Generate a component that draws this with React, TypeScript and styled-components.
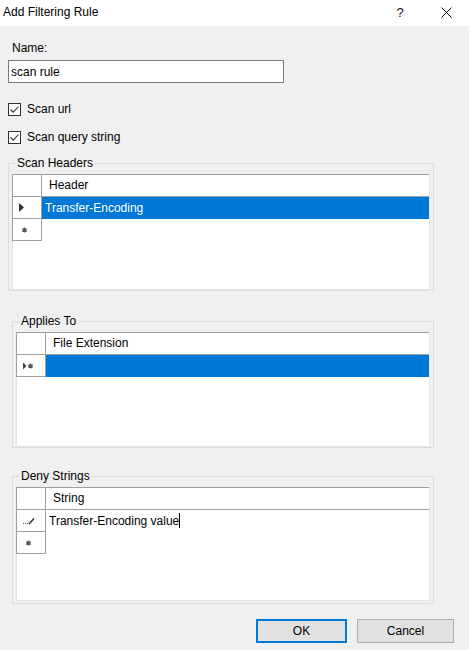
import React from 'react';
import styled, { createGlobalStyle } from 'styled-components';

const GlobalStyle = createGlobalStyle`
  html, body {
    margin: 0;
    padding: 0;
    background: #f0f0f0;
  }
  body {
    font-family: "Segoe UI", "Liberation Sans", Arial, sans-serif;
    font-size: 12px;
    color: #000;
  }
`;

const Window = styled.div`
  width: 469px;
  height: 650px;
  background: #f0f0f0;
  display: flex;
  flex-direction: column;
  overflow: hidden;
`;

const TitleBar = styled.div`
  height: 26px;
  background: #fff;
  display: flex;
  align-items: flex-start;
`;

const TitleText = styled.div`
  flex: 1;
  padding: 5px 0 0 3px;
  line-height: 15px;
`;

const TitleButton = styled.div`
  width: 46px;
  height: 24px;
  display: flex;
  align-items: center;
  justify-content: center;
  font-size: 13px;
  color: #111;
`;

const Body = styled.div`
  display: flex;
  flex-direction: column;
  padding: 15px 35px 0 8px;
`;

const FieldLabel = styled.div`
  line-height: 15px;
  margin-left: 4px;
`;

const NameInput = styled.input`
  margin-top: 4px;
  width: 276px;
  height: 23px;
  box-sizing: border-box;
  border: 1px solid #7a7a7a;
  padding: 0 2px;
  font: inherit;
  color: #000;
  background: #fff;
  outline: none;
`;

const CheckRow = styled.div<{ $top: number }>`
  display: flex;
  align-items: center;
  gap: 6px;
  height: 13px;
  margin-top: ${p => p.$top}px;
`;

const CheckBox = styled.span`
  width: 13px;
  height: 13px;
  box-sizing: border-box;
  border: 1px solid #333;
  background: #fff;
  display: flex;
  align-items: center;
  justify-content: center;
`;

const CheckLabel = styled.span`
  line-height: 15px;
`;

const GroupBox = styled.div<{ $top: number; $indent: number; $padBottom: number }>`
  position: relative;
  margin-top: ${p => p.$top}px;
  margin-left: ${p => p.$indent}px;
  border: 1px solid #dcdcdc;
  padding: 10px 3px ${p => p.$padBottom}px 3px;
`;

const Legend = styled.span`
  position: absolute;
  top: -8px;
  left: 6px;
  padding: 0 2px;
  line-height: 15px;
  background: #f0f0f0;
`;

const GridBox = styled.div<{ $height: number }>`
  height: ${p => p.$height}px;
  box-sizing: border-box;
  background: #fff;
  border: 1px solid #e3e3e3;
  border-top: none;
`;

const HeaderRow = styled.div`
  display: flex;
  height: 23px;
  box-sizing: border-box;
  margin-left: -1px;
  border-top: 1px solid #a0a0a0;
  border-bottom: 1px solid #a0a0a0;
`;

const Corner = styled.div`
  width: 30px;
  box-sizing: border-box;
  border-left: 1px solid #a0a0a0;
  border-right: 1px solid #a0a0a0;
`;

const HeaderCell = styled.div`
  flex: 1;
  padding-left: 7px;
  line-height: 21px;
`;

const DataRow = styled.div`
  display: flex;
  height: 22px;
  margin-left: -1px;
`;

const RowHeader = styled.div`
  width: 30px;
  box-sizing: border-box;
  border-left: 1px solid #a0a0a0;
  border-right: 1px solid #a0a0a0;
  border-bottom: 1px solid #a0a0a0;
  display: flex;
  align-items: center;
  padding-left: 6px;
`;

const DataCell = styled.div<{ $selected: boolean }>`
  flex: 1;
  padding-left: 3px;
  line-height: 22px;
  white-space: nowrap;
  background: ${p => (p.$selected ? '#0078d7' : '#fff')};
  color: ${p => (p.$selected ? '#fff' : '#000')};
`;

const Caret = styled.span`
  display: inline-block;
  width: 1px;
  height: 15px;
  background: #000;
  vertical-align: middle;
  margin-top: -2px;
`;

const Footer = styled.div`
  display: flex;
  justify-content: flex-end;
  gap: 10px;
  padding: 0 15px;
  margin-top: 15px;
`;

const Button = styled.button<{ $primary?: boolean; $width: number }>`
  width: ${p => p.$width}px;
  height: 24px;
  box-sizing: border-box;
  background: #e1e1e1;
  border: ${p => (p.$primary ? '2px solid #0078d7' : '1px solid #adadad')};
  font: inherit;
  color: #000;
  padding: 0;
`;

type Marker = 'current' | 'new' | 'currentNew' | 'editing' | 'none';

interface GridRow {
  marker: Marker;
  text?: string;
  selected?: boolean;
  caret?: boolean;
}

function RowGlyph({ kind }: { kind: Marker }) {
  switch (kind) {
    case 'current':
      return (
        <svg width="6" height="9" viewBox="0 0 6 9">
          <polygon points="0,0 5,4.5 0,9" fill="#333" />
        </svg>
      );
    case 'new':
      return (
        <svg width="9" height="6" viewBox="0 0 9 6">
          <path d="M5.5 0.5 V5.5 M3.3 1.6 L7.7 4.4 M3.3 4.4 L7.7 1.6" stroke="#555" strokeWidth="1.3" />
        </svg>
      );
    case 'currentNew':
      return (
        <svg width="11" height="8" viewBox="0 0 11 8">
          <polygon points="0,0.5 3.5,4 0,7.5" fill="#444" />
          <path d="M7.5 1.5 V6.5 M5.3 2.6 L9.7 5.4 M5.3 5.4 L9.7 2.6" stroke="#555" strokeWidth="1.3" />
        </svg>
      );
    case 'editing':
      return (
        <svg width="12" height="8" viewBox="0 0 12 8">
          <rect x="0" y="6" width="1" height="1" fill="#555" />
          <rect x="2" y="6" width="1" height="1" fill="#555" />
          <rect x="4" y="6" width="1" height="1" fill="#555" />
          <path d="M6 7 L11 1.5" stroke="#333" strokeWidth="1.6" />
        </svg>
      );
    default:
      return null;
  }
}

function DataGrid({ column, rows, height }: { column: string; rows: GridRow[]; height: number }) {
  return (
    <GridBox $height={height}>
      <HeaderRow>
        <Corner />
        <HeaderCell>{column}</HeaderCell>
      </HeaderRow>
      {rows.map((row, i) => (
        <DataRow key={i}>
          <RowHeader>
            <RowGlyph kind={row.marker} />
          </RowHeader>
          <DataCell $selected={!!row.selected}>
            {row.text}
            {row.caret && <Caret />}
          </DataCell>
        </DataRow>
      ))}
    </GridBox>
  );
}

function CheckMark() {
  return (
    <svg width="11" height="11" viewBox="0 0 11 11">
      <path d="M1.5 5.5 L4.2 8.2 L9.5 2.5" stroke="#333" strokeWidth="1.1" fill="none" />
    </svg>
  );
}

export default function App() {
  return (
    <Window>
      <GlobalStyle />
      <TitleBar>
        <TitleText>Add Filtering Rule</TitleText>
        <TitleButton>?</TitleButton>
        <TitleButton>
          <svg width="11" height="11" viewBox="0 0 11 11">
            <path d="M0.5 0.5 L10.5 10.5 M10.5 0.5 L0.5 10.5" stroke="#111" strokeWidth="1" />
          </svg>
        </TitleButton>
      </TitleBar>

      <Body>
        <FieldLabel>Name:</FieldLabel>
        <NameInput defaultValue="scan rule" />

        <CheckRow $top={20}>
          <CheckBox>
            <CheckMark />
          </CheckBox>
          <CheckLabel>Scan url</CheckLabel>
        </CheckRow>
        <CheckRow $top={15}>
          <CheckBox>
            <CheckMark />
          </CheckBox>
          <CheckLabel>Scan query string</CheckLabel>
        </CheckRow>

        <GroupBox $top={19} $indent={0} $padBottom={0}>
          <Legend>Scan Headers</Legend>
          <DataGrid
            column="Header"
            height={116}
            rows={[
              { marker: 'current', text: 'Transfer-Encoding', selected: true },
              { marker: 'new' },
            ]}
          />
        </GroupBox>

        <GroupBox $top={30} $indent={4} $padBottom={0}>
          <Legend>Applies To</Legend>
          <DataGrid column="File Extension" height={115} rows={[{ marker: 'currentNew', selected: true }]} />
        </GroupBox>

        <GroupBox $top={28} $indent={4} $padBottom={2}>
          <Legend>Deny Strings</Legend>
          <DataGrid
            column="String"
            height={114}
            rows={[
              { marker: 'editing', text: 'Transfer-Encoding value', caret: true },
              { marker: 'new' },
            ]}
          />
        </GroupBox>
      </Body>

      <Footer>
        <Button $primary $width={91}>OK</Button>
        <Button $width={97}>Cancel</Button>
      </Footer>
    </Window>
  );
}
